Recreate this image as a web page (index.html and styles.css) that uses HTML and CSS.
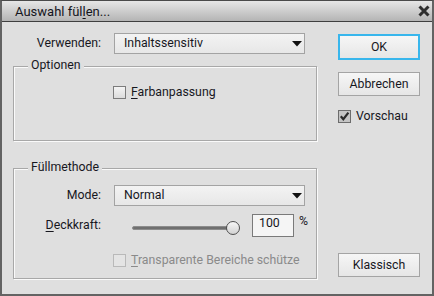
FILE: index.html
```html
<!DOCTYPE html>
<html lang="de">
<head>
<meta charset="utf-8">
<title>Auswahl füllen</title>
<link rel="stylesheet" href="styles.css">
</head>
<body>
<div class="window">
  <div class="titlebar">
    <span class="title">Auswahl fül<u>l</u>en...</span>
    <svg class="close" width="14" height="14" viewBox="0 0 14 14"><path d="M2.5 2.5 L11.5 11.5 M11.5 2.5 L2.5 11.5" stroke="#2e2e2e" stroke-width="3" stroke-linecap="butt"/></svg>
  </div>
  <div class="content">
    <div class="main">
      <div class="row top-row">
        <span class="lbl lbl-top">Verwenden:</span>
        <div class="select"><span>Inhaltssensitiv</span><svg class="arrow" width="10" height="6" viewBox="0 0 10 6"><path d="M0 0 H10 L5 5.5 Z" fill="#111"/></svg></div>
      </div>
      <div class="group group-options">
        <div class="legend">Optionen</div>
        <div class="check-row opt-check">
          <span class="cb"></span><span class="cb-text"><u>F</u>arbanpassung</span>
        </div>
      </div>
      <div class="group group-fill">
        <div class="legend">Füllmethode</div>
        <div class="row mode-row">
          <span class="lbl">Mode:</span>
          <div class="select"><span>Normal</span><svg class="arrow" width="10" height="6" viewBox="0 0 10 6"><path d="M0 0 H10 L5 5.5 Z" fill="#111"/></svg></div>
        </div>
        <div class="row opacity-row">
          <span class="lbl"><u>D</u>eckkraft:</span>
          <div class="slider"><div class="track"></div><div class="thumb"></div></div>
          <div class="num">100</div>
          <span class="pct">%</span>
        </div>
        <div class="check-row trans-check disabled">
          <span class="cb"></span><span class="cb-text"><u>T</u>ransparente Bereiche schütze</span>
        </div>
      </div>
    </div>
    <div class="side">
      <button class="btn btn-ok">OK</button>
      <button class="btn btn-cancel">Abbrechen</button>
      <div class="check-row preview-check">
        <span class="cb checked"><svg width="11" height="11" viewBox="0 0 11 11"><path d="M1.8 5.2 L4.3 8.2 L9.4 1.6" fill="none" stroke="#2a2a2a" stroke-width="2.2"/></svg></span><span class="cb-text">Vorschau</span>
      </div>
      <button class="btn btn-classic">Klassisch</button>
    </div>
  </div>
</div>
</body>
</html>
```
FILE: styles.css
```css
html, body {
  margin: 0;
  padding: 0;
  background: #dfdfdf;
}
body {
  font-family: Roboto, "Noto Sans", sans-serif;
  font-size: 12.3px;
  color: #17171e;
}
u { text-decoration: underline; text-underline-offset: 2px; }

.window {
  width: 434px;
  height: 296px;
  box-sizing: border-box;
  border: 2px solid #636363;
  border-top: 1px solid #4a4a4a;
  display: flex;
  flex-direction: column;
  background: #dfdfdf;
}

.titlebar {
  flex: none;
  height: 20px;
  border-bottom: 1px solid #3f3f3f;
  background: linear-gradient(#e6e6e6, #b4b4b4);
  display: flex;
  align-items: center;
  justify-content: space-between;
  padding: 0 1px 0 13px;
}
.title {
  font-size: 13px;
  line-height: 16px;
  padding-top: 2px;
  color: #15151c;
}
.close { display: block; }

.content {
  flex: 1;
  display: flex;
  padding: 11px 12px 0 11px;
  min-height: 0;
}
.main {
  width: 304px;
  flex: none;
}
.side {
  width: 82px;
  flex: none;
  margin-left: 21px;
  display: flex;
  flex-direction: column;
  align-items: stretch;
  padding-bottom: 17px;
}

.row {
  display: flex;
  align-items: flex-start;
}
.lbl {
  width: 87px;
  margin-right: 13px;
  text-align: right;
  line-height: 21px;
  flex: none;
}
.lbl-top { width: 88px; }

.select {
  width: 191px;
  height: 21px;
  box-sizing: border-box;
  border: 1px solid #a3a3a3;
  background: linear-gradient(#f3f3f3, #e7e7e7);
  display: flex;
  align-items: center;
  justify-content: space-between;
  padding: 0 2px 0 9px;
  line-height: 19px;
}
.arrow { display: block; margin-top: 1px; }

.group {
  box-sizing: border-box;
  width: 304px;
  border: 1px solid #a8a8a8;
  box-shadow: inset 1px 1px 0 #fafafa, 1px 1px 0 #fafafa;
}
.group-options {
  margin-top: 12px;
  height: 75px;
}
.group-fill {
  margin-top: 27px;
  height: 111px;
}
.legend {
  width: fit-content;
  margin: -9px 0 0 14px;
  padding: 0 3px;
  line-height: 15px;
  background: #dfdfdf;
}

.check-row {
  display: flex;
  align-items: center;
  height: 13px;
}
.cb {
  width: 13px;
  height: 13px;
  box-sizing: border-box;
  border: 1px solid #7c7c7c;
  background: linear-gradient(#f4f4f4, #dcdcdc);
  flex: none;
  display: flex;
  align-items: center;
  justify-content: center;
}
.cb-text {
  margin-left: 5px;
  line-height: 13px;
  white-space: nowrap;
}
.opt-check {
  margin: 13px 0 0 99px;
}
.disabled .cb {
  border-color: #b9b9b9;
  background: #e4e4e4;
}
.disabled .cb-text { color: #8a8a8a; }
.trans-check { margin: 17px 0 0 99px; }

.mode-row { margin-top: 10px; }
.opacity-row { margin-top: 8px; height: 23px; }
.opacity-row .lbl { line-height: 23px; }

.slider {
  width: 108px;
  height: 23px;
  box-sizing: border-box;
  margin-left: 18px;
  padding-top: 5px;
  display: flex;
  align-items: center;
  flex: none;
}
.track {
  width: 100px;
  height: 4px;
  box-sizing: border-box;
  background: #6f6f6f;
  border: 1px solid #8c8c8c;
  border-radius: 2px;
}
.thumb {
  width: 14px;
  height: 14px;
  box-sizing: border-box;
  margin-left: -6px;
  border-radius: 50%;
  border: 1px solid #4f4f4f;
  background: linear-gradient(#f6f6f6, #d2d2d2);
}
.num {
  width: 42px;
  height: 23px;
  box-sizing: border-box;
  margin-left: 12px;
  border: 1px solid #7a7a7a;
  background: #f5f5f5;
  padding-left: 6px;
  line-height: 17px;
}
.pct {
  margin-left: 5px;
  line-height: 15px;
}

.btn {
  font: inherit;
  color: inherit;
  box-sizing: border-box;
  height: 24px;
  width: 82px;
  padding: 0;
  border: 1px solid #a4a4a4;
  background: linear-gradient(#f6f6f6, #e6e6e6);
  line-height: 20px;
  text-align: center;
}
.btn-ok {
  margin-top: 1px;
  height: 26px;
  border: 2px solid #38b6ec;
}
.btn-cancel { margin-top: 12px; }
.preview-check { margin-top: 14px; }
.preview-check .cb {
  background: #c4c4c4;
  border-color: #6c6c6c;
}
.btn-classic { margin-top: auto; }
```
